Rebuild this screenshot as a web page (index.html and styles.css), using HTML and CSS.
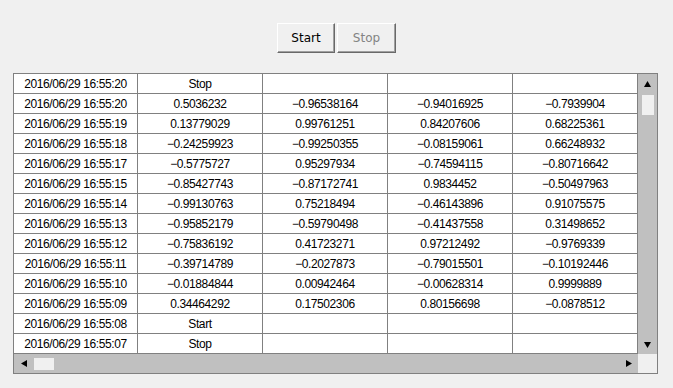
FILE: index.html
```html
<!DOCTYPE html>
<html lang="en">
<head>
    <meta charset="UTF-8">
    <title>Data Logger</title>
    <link rel="stylesheet" href="styles.css">
</head>
<body>
    <div class="toolbar">
        <button class="btn btn-start">Start</button>
        <button class="btn" disabled>Stop</button>
    </div>
    <div class="grid-view">
        <table class="data">
            <tr><td>2016/06/29 16:55:20</td><td>Stop</td><td></td><td></td><td></td></tr>
            <tr><td>2016/06/29 16:55:20</td><td>0.5036232</td><td>&minus;0.96538164</td><td>&minus;0.94016925</td><td>&minus;0.7939904</td></tr>
            <tr><td>2016/06/29 16:55:19</td><td>0.13779029</td><td>0.99761251</td><td>0.84207606</td><td>0.68225361</td></tr>
            <tr><td>2016/06/29 16:55:18</td><td>&minus;0.24259923</td><td>&minus;0.99250355</td><td>&minus;0.08159061</td><td>0.66248932</td></tr>
            <tr><td>2016/06/29 16:55:17</td><td>&minus;0.5775727</td><td>0.95297934</td><td>&minus;0.74594115</td><td>&minus;0.80716642</td></tr>
            <tr><td>2016/06/29 16:55:15</td><td>&minus;0.85427743</td><td>&minus;0.87172741</td><td>0.9834452</td><td>&minus;0.50497963</td></tr>
            <tr><td>2016/06/29 16:55:14</td><td>&minus;0.99130763</td><td>0.75218494</td><td>&minus;0.46143896</td><td>0.91075575</td></tr>
            <tr><td>2016/06/29 16:55:13</td><td>&minus;0.95852179</td><td>&minus;0.59790498</td><td>&minus;0.41437558</td><td>0.31498652</td></tr>
            <tr><td>2016/06/29 16:55:12</td><td>&minus;0.75836192</td><td>0.41723271</td><td>0.97212492</td><td>&minus;0.9769339</td></tr>
            <tr><td>2016/06/29 16:55:11</td><td>&minus;0.39714789</td><td>&minus;0.2027873</td><td>&minus;0.79015501</td><td>&minus;0.10192446</td></tr>
            <tr><td>2016/06/29 16:55:10</td><td>&minus;0.01884844</td><td>0.00942464</td><td>&minus;0.00628314</td><td>0.9999889</td></tr>
            <tr><td>2016/06/29 16:55:09</td><td>0.34464292</td><td>0.17502306</td><td>0.80156698</td><td>&minus;0.0878512</td></tr>
            <tr><td>2016/06/29 16:55:08</td><td>Start</td><td></td><td></td><td></td></tr>
            <tr><td>2016/06/29 16:55:07</td><td>Stop</td><td></td><td></td><td></td></tr>
        </table>
        <div class="vscroll">
            <div class="arrow"><svg width="7" height="6"><polygon points="3.5,0 7,6 0,6" fill="#000"/></svg></div>
            <div class="thumb"></div>
            <div class="arrow"><svg width="7" height="6"><polygon points="0,0 7,0 3.5,6" fill="#000"/></svg></div>
        </div>
        <div class="hscroll">
            <div class="arrow"><svg width="6" height="7"><polygon points="0,3.5 6,0 6,7" fill="#000"/></svg></div>
            <div class="thumb"></div>
            <div class="arrow"><svg width="6" height="7"><polygon points="0,0 6,3.5 0,7" fill="#000"/></svg></div>
        </div>
        <div class="corner"></div>
    </div>
</body>
</html>
```

FILE: styles.css
```css
body {
    margin: 0;
    background-color: #f0f0f0;
    font-family: "Liberation Sans", Arial, sans-serif;
}
.toolbar {
    display: flex;
    justify-content: center;
    gap: 2px;
    padding-top: 23px;
}
.btn {
    height: 30px;
    width: 59px;
    padding: 0;
    background: #f0f0f0;
    font-family: "DejaVu Sans", sans-serif;
    font-size: 12px;
    color: #000;
    border: 1px solid;
    border-color: #ffffff #696969 #696969 #ffffff;
    box-shadow: inset -1px -1px #a0a0a0;
}
.btn-start {
    width: 58px;
}
.btn:disabled {
    color: #838383;
}
.grid-view {
    margin: 20px 0 0 13px;
    width: 643px;
    border: 1px solid #808080;
    display: grid;
    grid-template-columns: 624px 19px;
    grid-template-rows: 280px 19px;
    background: #c0c0c0;
}
.data {
    border-collapse: separate;
    border-spacing: 0;
    table-layout: fixed;
    width: 624px;
    background: #fff;
    font-size: 12px;
    letter-spacing: -0.4px;
}
.data td {
    width: 124px;
    height: 18px;
    padding: 1px 0 0;
    border-right: 1px solid #808080;
    border-bottom: 1px solid #808080;
    text-align: center;
    line-height: 18px;
    white-space: nowrap;
    overflow: hidden;
}
.data td:first-child {
    width: 123px;
}
.vscroll {
    display: flex;
    flex-direction: column;
    align-items: center;
}
.vscroll .thumb {
    width: 12px;
    height: 20px;
    margin-top: 2px;
    background: #f0f0f0;
    flex: none;
}
.vscroll .arrow:last-child {
    margin-top: auto;
}
.hscroll {
    display: flex;
    align-items: center;
}
.hscroll .thumb {
    width: 20px;
    height: 12px;
    margin-left: 1px;
    background: #f0f0f0;
    flex: none;
}
.hscroll .arrow:last-child {
    margin-left: auto;
}
.arrow {
    width: 19px;
    height: 19px;
    display: flex;
    align-items: center;
    justify-content: center;
    flex: none;
}
.arrow svg {
    display: block;
}
.corner {
    background: #f0f0f0;
}
```
